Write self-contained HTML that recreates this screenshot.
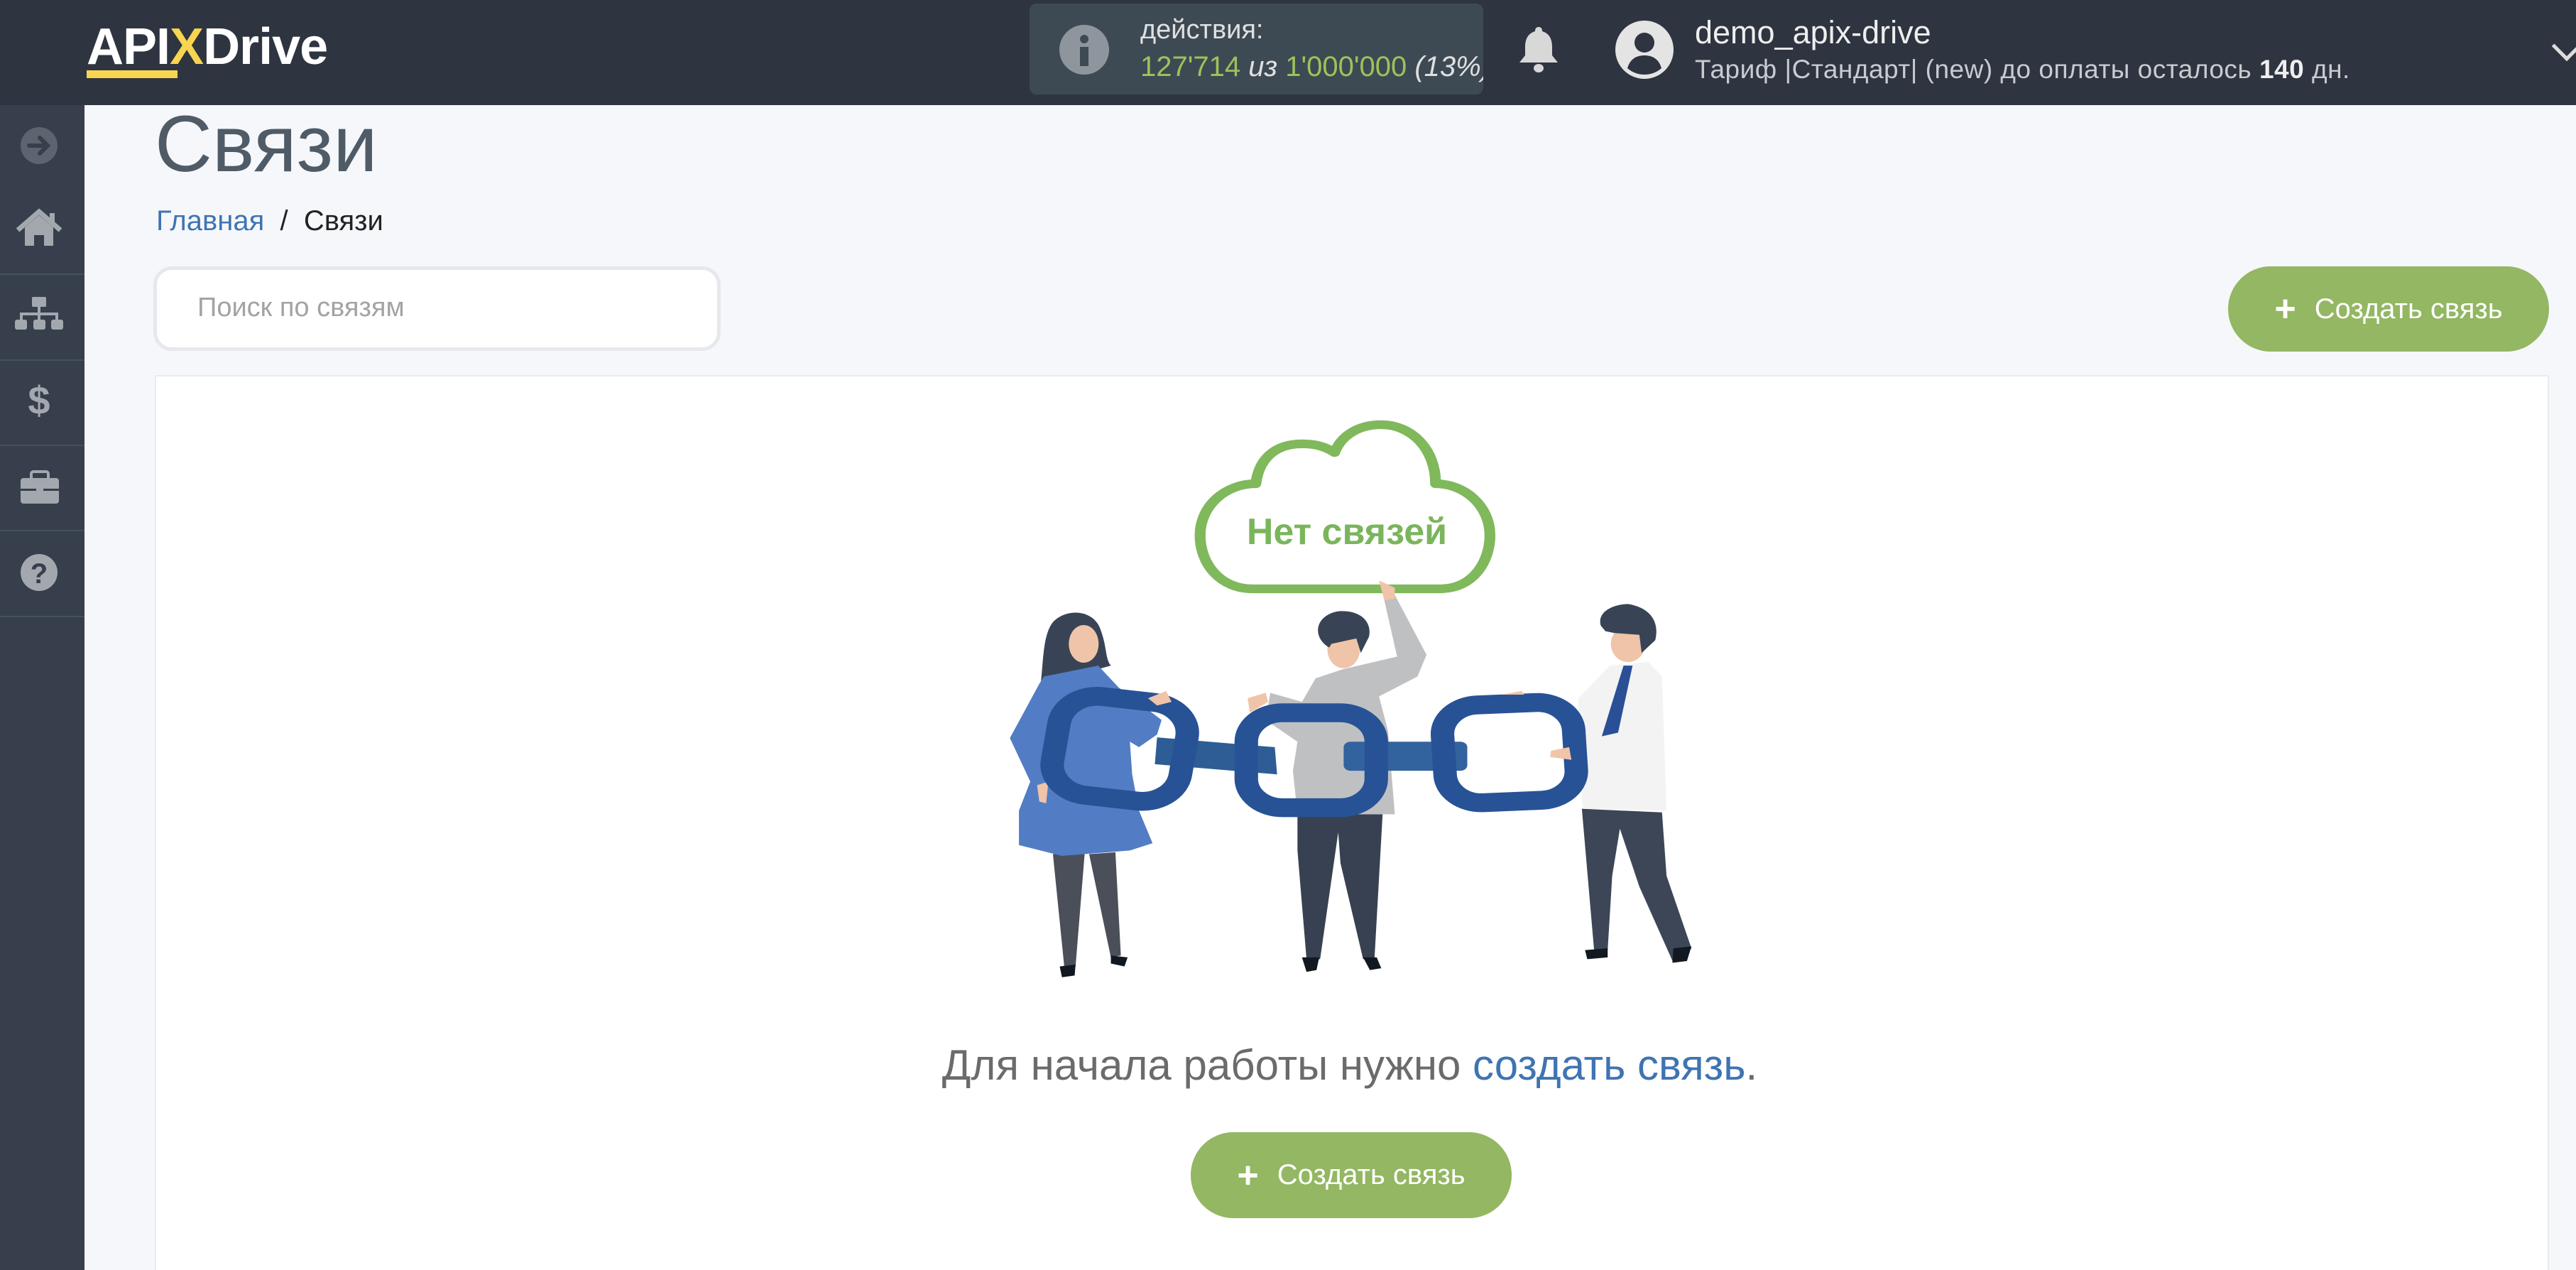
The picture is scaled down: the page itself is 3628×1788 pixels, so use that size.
<!DOCTYPE html>
<html style="overflow:hidden;width:3628px;height:1788px"><head><meta charset="utf-8"><style>
*{margin:0;padding:0;box-sizing:border-box}
body{width:3628px;height:1788px;overflow:hidden;background:#f5f7fb;font-family:"Liberation Sans","DejaVu Sans",sans-serif;position:relative}
.abs{position:absolute}
#hdr{left:0;top:0;width:3628px;height:148px;background:#2e3440}
#side{left:0;top:148px;width:119px;height:1640px;background:#363f4b}
.sep{position:absolute;left:0;width:119px;height:2px;background:#46505c}
.btn{background:#93b762;color:#fff;border-radius:60px;display:flex;align-items:center;justify-content:center;font-size:40px}
.btn b{font-size:52px;margin-right:26px;font-weight:bold}
</style></head><body>
<div id="hdr" class="abs"></div>
<div class="abs" style="left:122px;top:26px;font-size:72px;font-weight:bold;color:#fff;letter-spacing:-1px;line-height:80px">API<span style="color:#f7d54f">X</span>Drive</div>
<div class="abs" style="left:122px;top:99px;width:128px;height:11px;background:#f7d54f"></div>
<div class="abs" style="left:1450px;top:5px;width:639px;height:128px;background:#3d4a54;border-radius:10px;overflow:hidden">
 <div class="abs" style="left:42px;top:30px;width:70px;height:70px;border-radius:50%;background:#8e959d"></div>
 <div class="abs" style="left:71px;top:44px;width:12px;height:12px;border-radius:50%;background:#3d4a54"></div>
 <div class="abs" style="left:71px;top:61px;width:12px;height:27px;background:#3d4a54"></div>
 <div class="abs" style="left:156px;top:16px;font-size:38px;color:#e0e0e0">действия:</div>
 <div class="abs" style="left:156px;top:67px;font-size:40px;color:#e0e0e0;white-space:nowrap"><span style="color:#9dc25a">127'714</span> <i>из</i> <span style="color:#9dc25a">1'000'000</span> <i>(13%)</i></div>
</div>
<svg class="abs" style="left:2136px;top:36px" width="62" height="68" viewBox="0 0 62 68"><path d="M31 2c4 0 5 3 5 6 10 3 14 11 14 22v12l8 10H4l8-10V30c0-11 4-19 14-22 0-3 1-6 5-6z" fill="#d8d8d8"/><ellipse cx="31" cy="60" rx="7" ry="6" fill="#d8d8d8"/></svg>
<svg class="abs" style="left:2274px;top:28px" width="84" height="84" viewBox="0 0 84 84"><circle cx="42" cy="42" r="41" fill="#e4e4e4"/><circle cx="42" cy="32" r="14" fill="#2e3440"/><path d="M18 68c4-14 14-18 24-18s20 4 24 18c-7 6-15 9-24 9s-17-3-24-9z" fill="#2e3440"/></svg>
<div class="abs" style="left:2387px;top:20px;font-size:45px;color:#eee">demo_apix-drive</div>
<div class="abs" style="left:2387px;top:77px;font-size:37px;color:#c8cbd0;white-space:nowrap;letter-spacing:0.5px">Тариф |Стандарт| (new) до оплаты осталось <b style="color:#eee">140</b> дн.</div>
<div class="abs" style="left:3600px;top:50px;width:30px;height:30px;border-right:5px solid #ddd;border-bottom:5px solid #ddd;transform:rotate(45deg)"></div>

<div id="side" class="abs">
 <div class="sep" style="top:237px"></div><div class="sep" style="top:358px"></div><div class="sep" style="top:478px"></div><div class="sep" style="top:598px"></div><div class="sep" style="top:719px"></div>
</div>
<svg class="abs" style="left:0;top:148px" width="119" height="720" viewBox="0 0 119 720">
 <circle cx="55" cy="57" r="26" fill="#5b646f"/><path d="M41 57h26M56 46l11 11-11 11" stroke="#363f4b" stroke-width="6" fill="none" stroke-linecap="round"/>
 <path d="M25 176l30-26 30 26" stroke="#a3a8ae" stroke-width="7" fill="none"/><path d="M35 172l20-17 20 17v26H62v-15H48v15H35z" fill="#a3a8ae"/><rect x="70" y="152" width="7" height="14" fill="#a3a8ae"/>
 <rect x="45" y="270" width="20" height="14" rx="2" fill="#a3a8ae"/><path d="M55 284v10M30 304v-10h50v10M55 294v10" stroke="#a3a8ae" stroke-width="4" fill="none"/><rect x="21" y="302" width="17" height="14" rx="3" fill="#a3a8ae"/><rect x="47" y="302" width="17" height="14" rx="3" fill="#a3a8ae"/><rect x="72" y="302" width="17" height="14" rx="3" fill="#a3a8ae"/>
 <text x="55" y="435" font-size="56" font-weight="bold" fill="#a3a8ae" text-anchor="middle" font-family="Liberation Sans">$</text>
 <rect x="29" y="525" width="54" height="36" rx="4" fill="#a3a8ae"/><rect x="44" y="516" width="24" height="12" rx="3" fill="none" stroke="#a3a8ae" stroke-width="4"/><rect x="29" y="540" width="54" height="3" fill="#363f4b"/><rect x="51" y="537" width="10" height="9" fill="#a3a8ae"/>
 <circle cx="55" cy="658" r="26" fill="#a3a8ae"/><text x="55" y="673" font-size="40" font-weight="bold" fill="#363f4b" text-anchor="middle" font-family="Liberation Sans">?</text>
</svg>

<div class="abs" style="left:218px;top:138px;font-size:112px;color:#4f5b66;line-height:130px">Связи</div>
<div class="abs" style="left:220px;top:288px;font-size:40px;line-height:46px;color:#222"><span style="color:#3f74b2">Главная</span> &nbsp;/&nbsp; Связи</div>
<div class="abs" style="left:216px;top:375px;width:799px;height:119px;background:#fff;border:5px solid #e6e8ec;border-radius:26px"></div>
<div class="abs" style="left:278px;top:412px;font-size:38px;color:#a3a3a3">Поиск по связям</div>
<div class="abs btn" style="left:3138px;top:375px;width:452px;height:120px"><b>+</b>Создать связь</div>
<div class="abs" style="left:218px;top:528px;width:3372px;height:1270px;background:#fff;border:2px solid #e8ebef"></div>

<svg class="abs" style="left:0;top:0" width="3628" height="1788" viewBox="0 0 3628 1788">
<g transform="translate(1400,580) scale(0.6378,0.5102)">
 <path d="M570 488L985 488C1060 488 1095 410 1095 340C1095 260 1040 198 975 198C975 100 920 35 855 35C800 35 765 70 752 112C730 95 710 88 680 88C620 88 585 130 578 198C510 198 455 260 455 340C455 420 500 488 570 488Z" fill="none" stroke="#80b85c" stroke-width="24" stroke-linejoin="round"/>
 <path d="M130 1220L200 1220L180 1530L155 1530ZM210 1220L268 1215L280 1500L258 1505Z" fill="#4a4f5a"/>
 <path d="M145 1530L180 1525L178 1555L150 1560ZM258 1500L295 1505L288 1530L258 1522Z" fill="#111820"/>
 <path d="M100 780C110 700 105 620 130 580C160 540 220 545 235 600C250 650 245 680 258 700L200 720L120 760Z" fill="#384456"/>
 <ellipse cx="198" cy="640" rx="33" ry="52" fill="#efc4a8"/>
 <path d="M110 730L230 700L275 760L370 850L360 890L320 925L300 910L305 1000L320 1100L350 1190L300 1210L150 1225L55 1195L55 1100L80 1020L35 900L100 750Z" fill="#527dc4"/>
 <path d="M95 1030L120 1020L115 1080L100 1075Z" fill="#efc4a8"/>
 <path d="M670 1110L858 1110L840 1510L815 1510L765 1245L760 1160L720 1510L690 1510L670 1210Z" fill="#374151"/>
 <path d="M680 1505L718 1505L712 1540L690 1545ZM815 1505L845 1505L855 1535L830 1540Z" fill="#111820"/>
 <path d="M710 735L770 710L890 675L860 510L885 505L955 670L935 730L850 785L870 880L885 1110L670 1110L660 990L670 910L600 850L610 775L680 800Z" fill="#bfc0c2"/>
 <ellipse cx="772" cy="655" rx="36" ry="52" fill="#efc4a8"/>
 <path d="M740 650C700 620 710 560 760 550C810 545 835 580 828 620L810 665L800 625L745 640Z" fill="#384456"/>
 <path d="M850 465L885 485L885 515L862 520Z" fill="#efc4a8"/>
 <path d="M1298 1095L1475 1105L1485 1280L1540 1480L1500 1520L1425 1310L1382 1150L1365 1280L1355 1485L1325 1485Z" fill="#3d4657"/>
 <path d="M1305 1485L1355 1480L1355 1505L1310 1510ZM1500 1480L1540 1475L1530 1515L1498 1520Z" fill="#111820"/>
 <path d="M1290 790L1360 700L1445 690L1475 730L1485 1100L1300 1095L1290 960Z" fill="#f3f3f3"/>
 <path d="M1390 700L1410 700L1378 885L1342 895Z" fill="#2a4f96"/>
 <ellipse cx="1400" cy="640" rx="38" ry="50" fill="#efc4a8"/>
 <path d="M1340 590C1330 550 1370 530 1400 530C1450 540 1470 580 1460 630L1430 665L1425 615L1370 610L1350 605Z" fill="#384456"/>
 <path d="M360 898L620 925L625 1000L355 972Z" fill="#2e5d96"/>
 <rect x="772" y="910" width="273" height="80" rx="15" fill="#33639e"/>
 <rect x="135" y="792" width="285" height="275" rx="85" fill="none" stroke="#285296" stroke-width="52" transform="rotate(8 277 930)"/>
 <rect x="557" y="830" width="287" height="262" rx="80" fill="none" stroke="#285296" stroke-width="52"/>
 <rect x="993" y="805" width="290" height="270" rx="80" fill="none" stroke="#285296" stroke-width="52" transform="rotate(-3 1138 940)"/>
 <path d="M340 790L380 770L392 800L360 810ZM560 790L600 775L605 800L565 830ZM1230 935L1270 925L1275 960L1228 952ZM1120 780L1165 770L1170 780Z" fill="#efc4a8"/>
</g>
<text x="1897" y="766" font-size="52" font-weight="bold" fill="#7ab55c" text-anchor="middle" font-family="Liberation Sans">Нет связей</text>
</svg>

<div class="abs" style="left:1305px;top:1466px;width:1192px;font-size:60px;color:#6b6b6b;white-space:nowrap;line-height:68px;text-align:center">Для начала работы нужно <span style="color:#3f74b2">создать связь</span>.</div>
<div class="abs btn" style="left:1677px;top:1594px;width:452px;height:121px"><b>+</b>Создать связь</div>
</body></html>
